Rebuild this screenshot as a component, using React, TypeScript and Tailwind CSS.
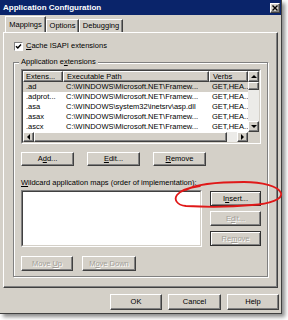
import React from "react";

const raised =
  "bg-[#d4d0c8] border border-t-white border-l-white border-r-[#404040] border-b-[#404040] shadow-[inset_-1px_-1px_0_#808080]";
const framed =
  "bg-[#d4d0c8] border border-[#303030] shadow-[inset_1px_1px_0_#ffffff,inset_-1px_-1px_0_#808080]";
const dim = "text-[#a19e97] [text-shadow:1px_1px_0_#ffffff]";

const rows = [
  [".ad", "C:\\WINDOWS\\Microsoft.NET\\Framew...", "GET,HEA..."],
  [".adprot...", "C:\\WINDOWS\\Microsoft.NET\\Framew...", "GET,HEA..."],
  [".asa", "C:\\WINDOWS\\system32\\inetsrv\\asp.dll", "GET,HEA..."],
  [".asax", "C:\\WINDOWS\\Microsoft.NET\\Framew...", "GET,HEA..."],
  [".ascx", "C:\\WINDOWS\\Microsoft.NET\\Framew...", "GET,HEA..."],
];

function Arrow({ dir }: { dir: "up" | "down" | "left" | "right" }) {
  const pts = {
    up: "1,5 4,2 7,5",
    down: "1,2 4,5 7,2",
    left: "5,1 2,4 5,7",
    right: "2,1 5,4 2,7",
  }[dir];
  return (
    <svg width="8" height="8" viewBox="0 0 8 8">
      <polygon points={pts} fill="#000" />
    </svg>
  );
}

function Btn({
  children,
  className,
  disabled,
  def,
}: {
  children: React.ReactNode;
  className: string;
  disabled?: boolean;
  def?: boolean;
}) {
  return (
    <div
      className={`${def ? framed : raised} ${className} flex items-center justify-center ${
        disabled ? dim : ""
      }`}
    >
      {children}
    </div>
  );
}

function ListView() {
  return (
    <div className="w-[240px] h-[75px] border border-[#808080] border-r-white border-b-white">
      <div className="flex h-full border border-[#404040] border-r-[#d4d0c8] border-b-[#d4d0c8]">
        <div className="flex w-[225px] flex-col bg-white">
          <div className="flex h-[11px]">
            <div className={`${raised} flex w-[40px] items-center pl-[2px]`}>Extens...</div>
            <div className={`${raised} flex w-[146px] items-center pl-[3px]`}>Executable Path</div>
            <div className={`${raised} flex w-[39px] items-center pl-[3px]`}>Verbs</div>
          </div>
          {rows.map((r, i) => (
            <div key={r[0]} className={`flex h-[10px] items-center ${i === 0 ? "bg-[#d4d0c8]" : ""}`}>
              <div className="w-[40px] pl-[3px]">{r[0]}</div>
              <div className="w-[146px] whitespace-nowrap pl-[3px]">{r[1]}</div>
              <div className="w-[39px] whitespace-nowrap pl-[3px]">{r[2]}</div>
            </div>
          ))}
          <div className="flex h-[10px]">
            <div className={`${raised} flex w-[11px] items-center justify-center`}>
              <Arrow dir="left" />
            </div>
            <div className="flex flex-1 bg-[#ecebe8]">
              <div className={`${raised} w-[193px]`} />
            </div>
            <div className={`${raised} flex w-[11px] items-center justify-center`}>
              <Arrow dir="right" />
            </div>
          </div>
        </div>
        <div className="flex w-[11px] flex-col">
          <div className={`${raised} flex h-[11px] items-center justify-center`}>
            <Arrow dir="up" />
          </div>
          <div className="flex flex-1 flex-col bg-[#ecebe8]">
            <div className={`${raised} h-[8px]`} />
          </div>
          <div className={`${raised} flex h-[11px] items-center justify-center`}>
            <Arrow dir="down" />
          </div>
          <div className="h-[10px] bg-[#d4d0c8]" />
        </div>
      </div>
    </div>
  );
}

export default function App() {
  return (
    <div className="relative h-[320px] w-[288px] bg-white font-['Liberation_Sans',Arial,sans-serif] text-[7.5px] leading-none text-black">
      <div className="flex h-[314px] w-[282px] flex-col border-r border-b border-[#404040] bg-[#d4d0c8] shadow-[3px_3px_4px_rgba(0,0,0,0.45)]">
        {/* title bar */}
        <div className="flex h-[15px] items-center justify-between bg-[#0a246a] pl-[3px] pr-[1px]">
          <span className="text-[8px] font-bold text-white">Application Configuration</span>
          <div className={`${raised} flex h-[10px] w-[10px] items-center justify-center`}>
            <svg width="6" height="6" viewBox="0 0 6 6">
              <path d="M0.5 0.5 L5.5 5.5 M5.5 0.5 L0.5 5.5" stroke="#000" strokeWidth="1.4" />
            </svg>
          </div>
        </div>

        {/* tabs */}
        <div className="relative z-10 mt-[2px] flex h-[15px] items-end pl-[5px]">
          <div className="flex h-[16px] w-[41px] items-center justify-center border border-b-0 border-t-white border-l-white border-r-[#404040] bg-[#d4d0c8] shadow-[inset_-1px_0_0_#808080]">
            Mappings
          </div>
          <div className="flex h-[13px] w-[33px] items-center justify-center border border-b-0 border-t-white border-l-white border-r-[#404040] shadow-[inset_-1px_0_0_#808080]">
            Options
          </div>
          <div className="flex h-[13px] w-[44px] items-center justify-center border border-b-0 border-t-white border-l-white border-r-[#404040] shadow-[inset_-1px_0_0_#808080]">
            Debugging
          </div>
        </div>

        {/* panel */}
        <div className="mx-[3px] flex h-[256px] flex-col border border-t-white border-l-white border-r-[#404040] border-b-[#404040] pt-[8px] pl-[9px] shadow-[inset_-1px_-1px_0_#808080]">
          <div className="flex h-[10px] items-center gap-[3px] pl-px">
            <div className="flex h-[9px] w-[9px] items-center justify-center border border-[#808080] border-r-white border-b-white bg-white">
              <svg width="7" height="7" viewBox="0 0 7 7">
                <path d="M1 3.2 L2.8 5 L6 1.6" stroke="#000" strokeWidth="1.5" fill="none" />
              </svg>
            </div>
            <span>
              <u className="underline-offset-1">C</u>ache ISAPI extensions
            </span>
          </div>

          {/* group */}
          <div className="relative mt-[11px] flex h-[215px] w-[255px] flex-col border border-[#808080] pt-[6px] pl-[7px] shadow-[1px_1px_0_#ffffff,inset_1px_1px_0_#ffffff]">
            <span className="absolute -top-[5px] left-[5px] bg-[#d4d0c8] px-[2px]">
              Application e<u className="underline-offset-1">x</u>tensions
            </span>
            <ListView />

            <div className="mt-[8px] flex h-[14px] gap-[13px]">
              <Btn className="w-[53px]">
                <span>
                  A<u className="underline-offset-1">d</u>d...
                </span>
              </Btn>
              <Btn className="w-[53px]">
                <span>
                  <u className="underline-offset-1">E</u>dit...
                </span>
              </Btn>
              <Btn className="w-[53px]">
                <span>
                  <u className="underline-offset-1">R</u>emove
                </span>
              </Btn>
            </div>

            <div className="mt-[12px] flex h-[10px] items-center">
              <span>
                <u className="underline-offset-1">W</u>ildcard application maps (order of implementation):
              </span>
            </div>

            <div className="mt-[2px] flex h-[57px] gap-[8px]">
              <div className="w-[181px] border border-[#808080] border-r-white border-b-white">
                <div className="h-full border border-[#404040] border-r-[#d4d0c8] border-b-[#d4d0c8] bg-white" />
              </div>
              <div className="flex w-[51px] flex-col gap-[5px] pt-px">
                <Btn def className="h-[15px]">
                  <span>
                    I<u className="underline-offset-1">n</u>sert...
                  </span>
                </Btn>
                <Btn disabled className="h-[15px]">
                  <span>
                    E<u className="underline-offset-1">d</u>it...
                  </span>
                </Btn>
                <Btn def disabled className="h-[15px]">
                  <span>
                    Re<u className="underline-offset-1">m</u>ove
                  </span>
                </Btn>
              </div>
            </div>

            <div className="mt-[9px] flex h-[15px] gap-[9px]">
              <Btn disabled className="w-[52px]">
                <span>
                  Move <u className="underline-offset-1">U</u>p
                </span>
              </Btn>
              <Btn disabled className="w-[54px]">
                <span>
                  M<u className="underline-offset-1">o</u>ve Down
                </span>
              </Btn>
            </div>
          </div>
        </div>

        {/* bottom buttons */}
        <div className="mt-[6px] flex h-[16px] justify-end gap-[6px] pr-[2px]">
          <Btn className="w-[52px]">OK</Btn>
          <Btn className="w-[53px]">Cancel</Btn>
          <Btn className="w-[52px]">Help</Btn>
        </div>
      </div>

      {/* hand-drawn red highlight */}
      <svg className="pointer-events-none absolute inset-0" width="288" height="320" viewBox="0 0 288 320">
        <path
          d="M186 190 C196 184 222 182 244 182 C262 182 278 186 281 193 C283 199 270 204 252 205 C232 207 204 207 186 206 C176 205 174 199 177 195 C180 191 186 188 200 186"
          stroke="#e01818"
          strokeWidth="1.8"
          fill="none"
          strokeLinecap="round"
        />
      </svg>
    </div>
  );
}
